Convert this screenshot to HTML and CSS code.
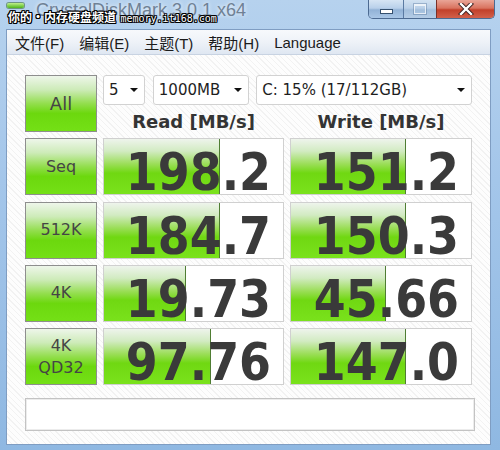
FILE: index.html
```html
<!DOCTYPE html>
<html>
<head>
<meta charset="utf-8">
<link rel="stylesheet" href="styles.css">
</head>
<body>
<div class="window">
  <div class="titlebar">
    <span class="appicon"></span>
    <span class="title">CrystalDiskMark 3.0.1 x64</span>
    <div class="controls">
      <span class="ctl min"><span class="min-glyph"></span></span>
      <span class="ctl max"><span class="max-glyph"></span></span>
      <span class="ctl close">
        <svg width="16" height="12" viewBox="0 0 16 12"><path d="M3 1 L13 11 M13 1 L3 11" stroke="#3a2020" stroke-width="4.2" stroke-linecap="square"/><path d="M3 1 L13 11 M13 1 L3 11" stroke="#fff" stroke-width="2.4" stroke-linecap="square"/></svg>
      </span>
    </div>
    <div class="watermark"><span class="wm-cjk">你的•内存硬盘频道</span> <span class="wm-url">memory.it168.com</span></div>
  </div>
  <div class="client">
    <div class="menubar">
      <span class="menu-item">文件(F)</span>
      <span class="menu-item">编辑(E)</span>
      <span class="menu-item">主题(T)</span>
      <span class="menu-item">帮助(H)</span>
      <span class="menu-item">Language</span>
    </div>
    <div class="content">
      <div class="grid">
        <div class="label all">All</div>
        <div class="top-right">
          <div class="combos">
            <div class="combo c-count"><span>5</span><span class="arrow"></span></div>
            <div class="combo c-size"><span>1000MB</span><span class="arrow"></span></div>
            <div class="combo c-drive"><span>C: 15% (17/112GB)</span><span class="arrow"></span></div>
          </div>
          <div class="headers">
            <div class="header">Read [MB/s]</div>
            <div class="header">Write [MB/s]</div>
          </div>
        </div>

        <div class="label">Seq</div>
        <div class="val"><div class="bar" style="width:65%"></div><span class="num">198.2</span></div>
        <div class="val"><div class="bar" style="width:64%"></div><span class="num">151.2</span></div>

        <div class="label">512K</div>
        <div class="val"><div class="bar" style="width:65%"></div><span class="num">184.7</span></div>
        <div class="val"><div class="bar" style="width:64%"></div><span class="num">150.3</span></div>

        <div class="label">4K</div>
        <div class="val"><div class="bar" style="width:46%"></div><span class="num">19.73</span></div>
        <div class="val"><div class="bar" style="width:53%"></div><span class="num">45.66</span></div>

        <div class="label two">4K<br>QD32</div>
        <div class="val"><div class="bar" style="width:60%"></div><span class="num">97.76</span></div>
        <div class="val"><div class="bar" style="width:64%"></div><span class="num">147.0</span></div>
      </div>
      <div class="comment"></div>
    </div>
  </div>
</div>
</body>
</html>
```
FILE: styles.css
```css
html, body {
  margin: 0;
  padding: 0;
}
body {
  width: 500px;
  height: 450px;
  overflow: hidden;
  font-family: "Liberation Sans", "Noto Sans CJK SC", sans-serif;
}
.window {
  width: 500px;
  height: 450px;
  box-sizing: border-box;
  display: flex;
  flex-direction: column;
  padding: 0 9px 5px 6px;
  background: linear-gradient(to bottom, #b6d2ee 0%, #a4c6ea 40%, #8fb8e2 100%);
}
.titlebar {
  position: relative;
  height: 29px;
  flex: none;
  display: flex;
  align-items: flex-start;
  margin: 0 -9px 0 -6px;
}
.appicon {
  width: 17px;
  height: 5px;
  margin: 3px 0 0 7px;
  border-radius: 2px;
  background: linear-gradient(to bottom, #bff08a, #4fb51b);
  box-shadow: 0 0 0 1px rgba(40, 90, 20, 0.5);
}
.title {
  margin: 0 0 0 12px;
  font-size: 18px;
  line-height: 20px;
  color: #6f8195;
  text-shadow: 0 0 4px rgba(255, 255, 255, 0.9);
  white-space: nowrap;
}
.controls {
  margin-left: auto;
  margin-right: 5px;
  display: flex;
  height: 18px;
  border: 1px solid #4c6a91;
  border-top: none;
  border-radius: 0 0 5px 5px;
  overflow: hidden;
}
.ctl {
  display: flex;
  align-items: center;
  justify-content: center;
  height: 18px;
}
.min {
  width: 34px;
  background: linear-gradient(to bottom, #d6e5f4 0%, #b9d0ea 45%, #92b2d6 55%, #a9c6e6 100%);
  border-right: 1px solid #5a7aa2;
}
.max {
  width: 32px;
  background: linear-gradient(to bottom, #d2e2f2 0%, #bad0e8 45%, #a2bedc 55%, #b4cce6 100%);
  border-right: 1px solid #7a3028;
}
.close {
  width: 57px;
  background: linear-gradient(to bottom, #e9a597 0%, #d9735f 45%, #c2402a 55%, #d2604a 100%);
}
.min-glyph {
  width: 11px;
  height: 3px;
  margin-top: 4px;
  background: #fff;
  border: 1px solid #35506f;
}
.max-glyph {
  width: 10px;
  height: 7px;
  border: 1px solid rgba(255, 255, 255, 0.7);
  border-top-width: 2px;
  box-shadow: 0 0 0 1px rgba(70, 100, 140, 0.35);
}
.watermark {
  position: absolute;
  left: 8px;
  top: 8px;
  color: #fff;
  font-weight: bold;
  white-space: nowrap;
  text-shadow: 1px 0 #000, -1px 0 #000, 0 1px #000, 0 -1px #000, 1px 1px #000, -1px -1px #000, 1px -1px #000, -1px 1px #000;
}
.wm-cjk {
  font-family: "Noto Sans CJK SC", sans-serif;
  font-size: 12px;
}
.wm-url {
  font-family: "DejaVu Sans Mono", monospace;
  font-size: 10px;
  font-weight: normal;
}
.client {
  flex: 1;
  display: flex;
  flex-direction: column;
  border: 1px solid #7f9dc2;
  background: repeating-linear-gradient(45deg, #fdfdfd 0 3px, #f2f2f2 3px 4px);
}
.menubar {
  height: 24px;
  flex: none;
  display: flex;
  align-items: center;
  gap: 15px;
  padding-left: 8px;
  background: linear-gradient(to bottom, #f7f9fc 0%, #eef2f8 50%, #dfe7f2 100%);
  border-bottom: 1px solid #c8d3e2;
  font-size: 15px;
  color: #1b1b1b;
}
.content {
  padding: 20px 0 0 18px;
}
.grid {
  display: grid;
  grid-template-columns: 72px 181px 182px;
  grid-auto-rows: 57px;
  column-gap: 6px;
  row-gap: 6.33px;
}
.label {
  box-sizing: border-box;
  border: 1px solid #8e8e8e;
  display: flex;
  align-items: center;
  justify-content: center;
  text-align: center;
  font-family: "DejaVu Sans", sans-serif;
  font-size: 16px;
  line-height: 22px;
  color: #454545;
  background: linear-gradient(to bottom, #eef6ea 0%, #cdebb8 25%, #93de4e 50%, #6cd80e 68%, #74e016 100%);
}
.all {
  font-size: 18px;
}
.top-right {
  grid-column: 2 / span 2;
  display: flex;
  flex-direction: column;
}
.combos {
  display: flex;
  height: 30px;
}
.combo {
  box-sizing: border-box;
  height: 30px;
  display: flex;
  align-items: center;
  justify-content: space-between;
  padding: 0 4px 0 5px;
  background: #fff;
  border: 1px solid #d2d2d2;
  border-radius: 3px;
  font-family: "DejaVu Sans", sans-serif;
  font-size: 15px;
  color: #1e1e1e;
}
.c-count {
  width: 42px;
  margin-right: 8px;
}
.c-size {
  width: 97px;
  margin-right: 7px;
}
.c-drive {
  width: 217px;
  padding-right: 4px;
}
.arrow {
  width: 0;
  height: 0;
  border-left: 4px solid transparent;
  border-right: 4px solid transparent;
  border-top: 4px solid #111;
  margin-right: 2px;
}
.headers {
  flex: 1;
  display: grid;
  grid-template-columns: 181px 182px;
  column-gap: 6px;
  align-items: center;
}
.header {
  text-align: center;
  font-family: "DejaVu Sans", sans-serif;
  font-weight: bold;
  font-size: 18px;
  color: #343434;
  padding-top: 5px;
}
.val {
  position: relative;
  box-sizing: border-box;
  border: 1px solid #d0d0d0;
  background: #fff;
  text-align: right;
  padding: 14px 12px 0 0;
}
.bar {
  position: absolute;
  left: 0;
  top: 0;
  bottom: 0;
  box-sizing: border-box;
  border-right: 1px solid #4f7d33;
  background: linear-gradient(to bottom, #eef4ec 0%, #d2ebc2 22%, #9cde5a 45%, #70d812 62%, #7ae21c 100%);
}
.num {
  position: relative;
  font-family: "DejaVu Sans Condensed", "DejaVu Sans", sans-serif;
  font-stretch: condensed;
  font-weight: bold;
  font-size: 51px;
  line-height: 40px;
  color: #3a3a3a;
}
.comment {
  margin-top: 13px;
  width: 450px;
  height: 33px;
  box-sizing: border-box;
  border: 1px solid #c3c3c3;
  box-shadow: inset 0 0 0 1px #ececec;
  background: #fff;
}
```
